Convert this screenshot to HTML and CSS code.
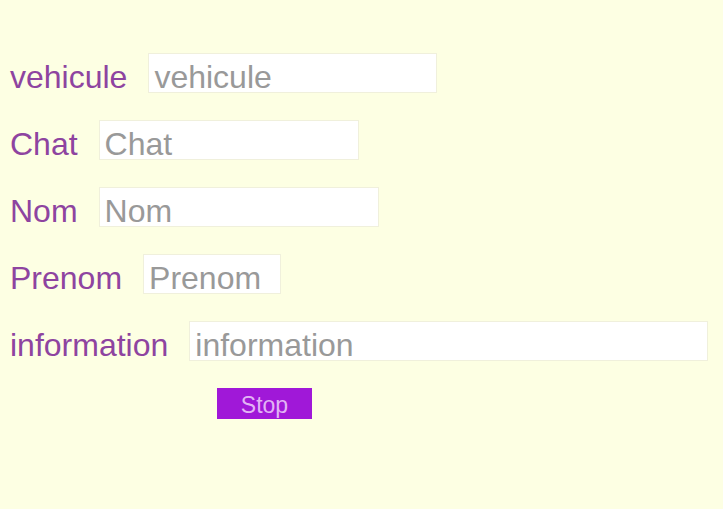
FILE: index.html
```html
<!DOCTYPE html>
<html>
<head>
<meta charset="utf-8">
<link rel="stylesheet" href="styles.css">
</head>
<body>
<form class="form">
  <div class="row"><label class="lbl">vehicule</label><input class="field w-vehicule" placeholder="vehicule"></div>
  <div class="row"><label class="lbl">Chat</label><input class="field w-chat" placeholder="Chat"></div>
  <div class="row"><label class="lbl">Nom</label><input class="field w-nom" placeholder="Nom"></div>
  <div class="row"><label class="lbl">Prenom</label><input class="field w-prenom" placeholder="Prenom"></div>
  <div class="row"><label class="lbl">information</label><input class="field w-info" placeholder="information"></div>
  <div class="actions"><button type="button" class="btn">Stop</button></div>
</form>
</body>
</html>
```
FILE: styles.css
```css
html, body {
  margin: 0;
  padding: 0;
  background: #fdffe3;
  font-family: "Liberation Sans", Arial, sans-serif;
}
.form {
  padding: 53px 0 0 10px;
  display: flex;
  flex-direction: column;
  gap: 27px;
}
.row {
  display: flex;
  align-items: flex-start;
  gap: 21px;
  height: 40px;
}
.lbl {
  box-sizing: border-box;
  height: 40px;
  padding-top: 8px;
  font-size: 32px;
  color: #8e44a0;
  line-height: 32px;
}
.field {
  box-sizing: border-box;
  height: 40px;
  margin: 0;
  padding: 8px 5px 0 5px;
  border: 1px solid #f0f0dc;
  background: #fff;
  font-family: "Liberation Sans", Arial, sans-serif;
  font-size: 32px;
  color: #333;
  outline: none;
}
.field::placeholder {
  color: #999;
}
.w-vehicule { width: 289px; }
.w-chat { width: 260px; }
.w-nom { width: 280px; }
.w-prenom { width: 138px; }
.w-info { width: 519px; }
.actions {
  padding-left: 207px;
}
.btn {
  box-sizing: border-box;
  width: 95px;
  height: 31px;
  margin: 0;
  padding: 3px 0 0 0;
  border: none;
  background: #a018d8;
  color: #e2b4f4;
  font-family: "Liberation Sans", Arial, sans-serif;
  font-size: 23px;
  line-height: 28px;
}
```
